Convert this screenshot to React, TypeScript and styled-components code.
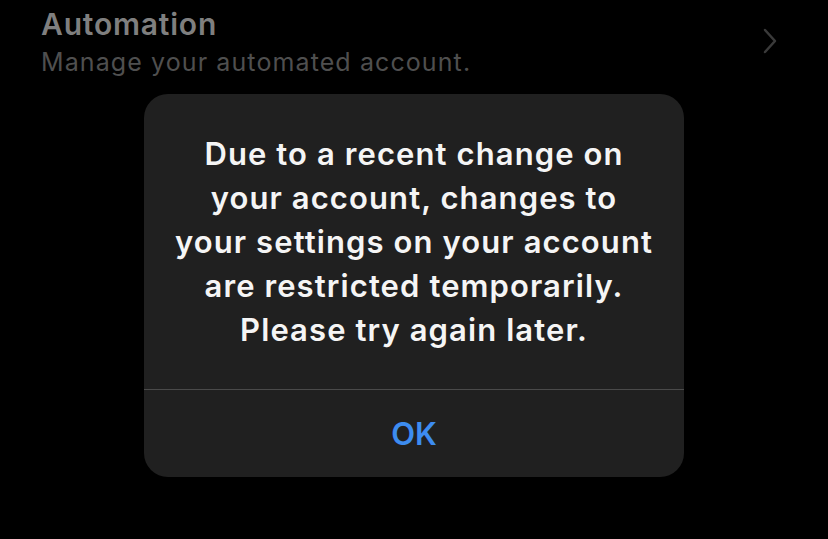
import React from "react";
import styled, { createGlobalStyle } from "styled-components";

const Global = createGlobalStyle`
  html, body { margin: 0; padding: 0; background: #000; }
  body { width: 828px; height: 539px; overflow: hidden; font-family: Inter, "Noto Sans", sans-serif; }
`;

const Screen = styled.div`
  position: relative;
  width: 828px;
  height: 539px;
  background: #000;
  overflow: hidden;
`;

const Row = styled.div`
  display: flex;
  align-items: flex-start;
  justify-content: space-between;
  padding: 5px 50px 0 41px;
`;

const RowText = styled.div`
  display: flex;
  flex-direction: column;
`;

const Title = styled.div`
  font-size: 30px;
  font-weight: 600;
  color: #7f7f7f;
  line-height: 38px;
  letter-spacing: 0.8px;
`;

const Subtitle = styled.div`
  font-size: 25px;
  font-weight: 400;
  color: #4f4f4f;
  line-height: 34px;
  letter-spacing: 1.1px;
  margin-top: 2px;
`;

const Chevron = styled.svg`
  width: 16px;
  height: 26px;
  margin-top: 23px;
`;

const Overlay = styled.div`
  position: absolute;
  left: 144px;
  top: 94px;
`;

const Dialog = styled.div`
  width: 540px;
  height: 383px;
  background: #202020;
  border-radius: 24px;
  display: flex;
  flex-direction: column;
  overflow: hidden;
`;

const Message = styled.div`
  flex: 0 0 295px;
  box-sizing: border-box;
  padding-top: 38px;
  text-align: center;
  color: #f5f5f5;
  font-size: 31px;
  font-weight: 600;
  line-height: 44px;
  letter-spacing: 1.1px;
`;

const Divider = styled.div`
  height: 1px;
  background: #4a4a4a;
`;

const Button = styled.div`
  flex: 1;
  display: flex;
  align-items: center;
  justify-content: center;
  color: #3d8cf0;
  font-size: 31px;
  font-weight: 600;
`;

export default function App() {
  return (
    <Screen>
      <Global />
      <Row>
        <RowText>
          <Title>Automation</Title>
          <Subtitle>Manage your automated account.</Subtitle>
        </RowText>
        <Chevron viewBox="0 0 16 26">
          <path d="M3 2 L13 13 L3 24" fill="none" stroke="#3a3a3a" strokeWidth="2.5" strokeLinecap="round" strokeLinejoin="round" />
        </Chevron>
      </Row>
      <Overlay>
        <Dialog>
          <Message>
            Due to a recent change on<br />
            your account, changes to<br />
            your settings on your account<br />
            are restricted temporarily.<br />
            Please try again later.
          </Message>
          <Divider />
          <Button>OK</Button>
        </Dialog>
      </Overlay>
    </Screen>
  );
}
